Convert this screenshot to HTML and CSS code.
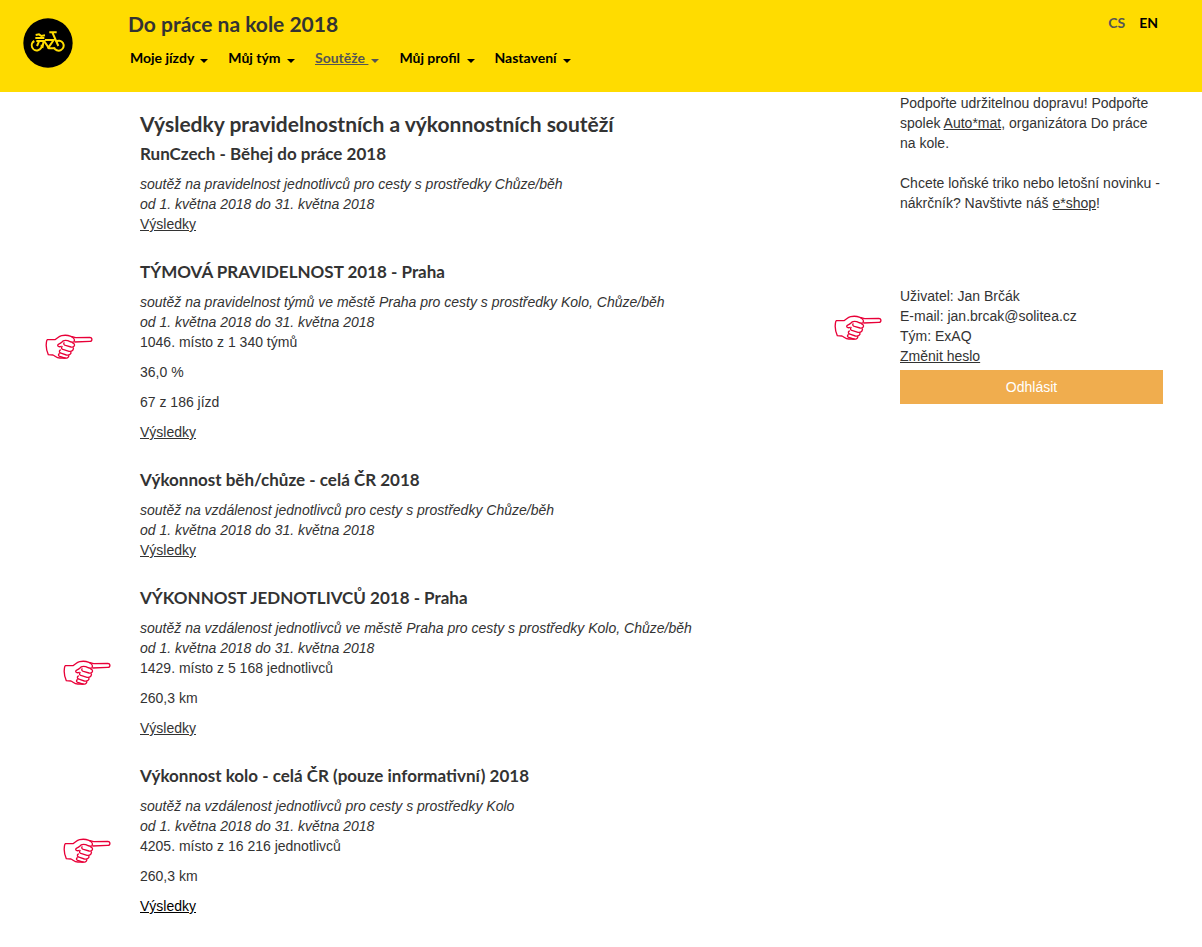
FILE: index.html
```html
<!DOCTYPE html>
<html lang="cs">
<head>
    <title>Do práce na kole 2018</title>
    <meta charset="utf-8">
    <meta name="viewport" content="width=device-width, initial-scale=1.0">
    <link rel="stylesheet" href="styles.css">
</head>
<body>
    <!-- Shared drawings -->
    <svg class="defs" aria-hidden="true">
        <symbol id="hand" viewBox="0 0 144 75">
            <path d="M6 17 L30 17 C38 12 42 7 50 5 C58 3 70 4 78 7 L92 11 L134 10 C143 11 143 22 134 22 L88 24"/>
            <path d="M6 17 C2 30 3 46 10 62 L24 63 C31 66 35 73 46 72 L62 72"/>
            <path d="M78 7 C86 11 91 17 87 23 C83 28 76 23 68 20 C60 18 53 20 50 25 C44 31 39 29 38 34 C38 39 44 39 49 37"/>
            <path d="M58 25 C54 30 57 34 64 35 L78 39 C87 41 91 34 87 29 L82 26"/>
            <path d="M52 36 C47 42 50 46 56 47 L72 52 C82 54 88 45 84 40"/>
            <path d="M47 47 C40 52 43 57 50 58 L64 63 C73 65 81 59 77 53"/>
            <path d="M44 58 C38 62 40 67 47 68 L58 72 C67 74 74 68 70 64"/>
        </symbol>
    </svg>

    <header class="header">
        <a href="#" class="logo" aria-label="Do práce na kole">
            <svg viewBox="0 0 150 150">
                <circle cx="75" cy="75" r="74" fill="#000"/>
                <g fill="none" stroke="#ffdc00" stroke-width="6">
                    <path d="M34 69 A15 15 0 1 0 56 80"/>
                    <path d="M98 71 A15 15 0 1 1 93 88"/>
                    <path d="M42 84 L48 70 M66 66 H92 L74 92 M62 67 L78 91 H94 M106 84 L88 43 M79 43 H101"/>
                    <path d="M38 51 L48 49 L55 54 L66 52 M37 60 H64 M40 69 H62 L58 90" stroke-width="6"/>
                </g>
            </svg>
        </a>
        <div class="header-main">
            <div class="site-title">Do práce na kole 2018</div>
            <nav>
                <ul class="menu">
                    <li><a href="#">Moje jízdy <span class="caret"></span></a></li>
                    <li><a href="#">Můj tým <span class="caret"></span></a></li>
                    <li><a href="#" class="active"><u>Soutěže&nbsp;</u><span class="caret"></span></a></li>
                    <li><a href="#">Můj profil <span class="caret"></span></a></li>
                    <li><a href="#">Nastavení <span class="caret"></span></a></li>
                </ul>
            </nav>
        </div>
        <div class="languages">
            <a href="#" class="active">CS</a>
            <a href="#">EN</a>
        </div>
    </header>

    <div class="container">
        <main>
            <h1>Výsledky pravidelnostních a výkonnostních soutěží</h1>

            <section class="competition">
                <h2>RunCzech - Běhej do práce 2018</h2>
                <em>soutěž na pravidelnost jednotlivců pro cesty s prostředky Chůze/běh<br>
                od 1. května 2018 do 31. května 2018</em>
                <a href="#">Výsledky</a>
            </section>

            <section class="competition">
                <svg class="hand hand-far"><use href="#hand"/></svg>
                <h2>TÝMOVÁ PRAVIDELNOST 2018 - Praha</h2>
                <em>soutěž na pravidelnost týmů ve městě Praha pro cesty s prostředky Kolo, Chůze/běh<br>
                od 1. května 2018 do 31. května 2018</em>
                <p>1046. místo z 1 340 týmů</p>
                <p>36,0 %</p>
                <p>67 z 186 jízd</p>
                <a href="#">Výsledky</a>
            </section>

            <section class="competition">
                <h2>Výkonnost běh/chůze - celá ČR 2018</h2>
                <em>soutěž na vzdálenost jednotlivců pro cesty s prostředky Chůze/běh<br>
                od 1. května 2018 do 31. května 2018</em>
                <a href="#">Výsledky</a>
            </section>

            <section class="competition">
                <svg class="hand"><use href="#hand"/></svg>
                <h2>VÝKONNOST JEDNOTLIVCŮ 2018 - Praha</h2>
                <em>soutěž na vzdálenost jednotlivců ve městě Praha pro cesty s prostředky Kolo, Chůze/běh<br>
                od 1. května 2018 do 31. května 2018</em>
                <p>1429. místo z 5 168 jednotlivců</p>
                <p>260,3 km</p>
                <a href="#">Výsledky</a>
            </section>

            <section class="competition">
                <svg class="hand"><use href="#hand"/></svg>
                <h2>Výkonnost kolo - celá ČR (pouze informativní) 2018</h2>
                <em>soutěž na vzdálenost jednotlivců pro cesty s prostředky Kolo<br>
                od 1. května 2018 do 31. května 2018</em>
                <p>4205. místo z 16 216 jednotlivců</p>
                <p>260,3 km</p>
                <a href="#" class="current">Výsledky</a>
            </section>
        </main>

        <aside>
            <p class="promo">Podpořte udržitelnou dopravu! Podpořte spolek <a href="#">Auto*mat</a>, organizátora Do práce na kole.</p>
            <p class="promo">Chcete loňské triko nebo letošní novinku - nákrčník? Navštivte náš <a href="#">e*shop</a>!</p>
            <div class="user">
                <svg class="hand hand-user"><use href="#hand"/></svg>
                Uživatel: Jan Brčák<br>
                E-mail: jan.brcak@solitea.cz<br>
                Tým: ExAQ<br>
                <a href="#">Změnit heslo</a>
                <button type="button">Odhlásit</button>
            </div>
        </aside>
    </div>
</body>
</html>
```

FILE: styles.css
```css
/* General styles */
* {
    box-sizing: border-box;
}

body {
    margin: 0;
    font-family: "Liberation Sans", Arial, sans-serif;
    font-size: 14px;
    line-height: 20px;
    color: #333;
    background: #fff;
}

a {
    color: #333;
    text-decoration: underline;
}

.defs {
    display: none;
}

/* Header styles */
.header {
    display: flex;
    height: 92px;
    padding: 13px 44px 0 23px;
    background: #ffdc00;
    font-family: Lato, sans-serif;
    font-weight: 700;
}

.header a {
    color: #000;
    text-decoration: none;
}

.header a.active {
    color: #555;
}

.logo {
    width: 50px;
    height: 50px;
    margin-top: 5px;
}

.logo svg {
    display: block;
    width: 100%;
}

.header-main {
    flex: 1;
    padding: 1px 0 0 55px;
}

.site-title {
    font-size: 21px;
    color: #333;
}

.menu {
    display: flex;
    gap: 20px;
    margin: 14px 0 0;
    padding: 0 0 0 2px;
    list-style: none;
}

.caret {
    display: inline-block;
    margin-left: 3px;
    border-top: 4px solid;
    border-left: 4px solid transparent;
    border-right: 4px solid transparent;
}

.languages {
    display: flex;
    gap: 14px;
}

/* Content styles */
.container {
    display: grid;
    grid-template-columns: 1fr 263px;
    gap: 30px;
    padding: 1px 39px 30px 140px;
}

main {
    padding-top: 21px;
}

h1,
h2 {
    margin: 0 0 10px;
    font-family: Lato, sans-serif;
    font-weight: 700;
    line-height: 20px;
}

h1 {
    font-size: 21px;
}

h2 {
    font-size: 17px;
}

.competition {
    position: relative;
    margin-bottom: 28px;
}

.competition em {
    display: block;
}

.competition p {
    margin: 0 0 10px;
}

.current {
    color: #000;
}

/* Red pointing hands beside the text */
.hand {
    position: absolute;
    top: 72px;
    left: -77px;
    width: 48px;
    height: 25px;
    fill: none;
    stroke: #e80038;
    stroke-width: 4;
}

.hand-far {
    left: -95px;
}

.hand-user {
    top: 29px;
    left: -66px;
}

/* Sidebar styles */
.promo {
    margin: 0 0 20px;
}

.user {
    position: relative;
    margin-top: 73px;
}

button {
    display: block;
    width: 100%;
    height: 34px;
    margin-top: 4px;
    border: none;
    background: #f0ad4e;
    color: #fff;
    font: inherit;
    cursor: pointer;
}
```
